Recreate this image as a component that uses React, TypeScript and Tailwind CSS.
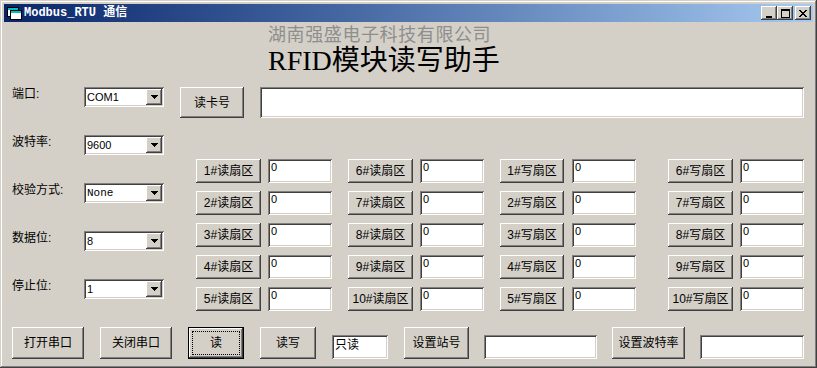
import React from 'react';

const raised =
  'bg-[#d4d0c8] shadow-[inset_-1px_-1px_#404040,inset_1px_1px_#ffffff,inset_-2px_-2px_#808080,inset_2px_2px_#d4d0c8]';
const sunken =
  'bg-white shadow-[inset_1px_1px_#808080,inset_-1px_-1px_#ffffff,inset_2px_2px_#404040,inset_-2px_-2px_#d4d0c8]';

function Btn({ label, className = '' }: { label: string; className?: string }) {
  return (
    <div className={`${raised} flex items-center justify-center text-[12px] leading-none text-black ${className}`}>
      {label}
    </div>
  );
}

function Field({ value = '', className = '' }: { value?: string; className?: string }) {
  return (
    <div className={`${sunken} pl-[3px] pt-[2px] text-[11px] leading-[12px] text-black ${className}`}>{value}</div>
  );
}

function Combo({ value, mono }: { value: string; mono?: boolean }) {
  return (
    <div className={`${sunken} w-[80px] h-[20px] p-[2px] flex`}>
      <span
        className={`flex-1 pl-[1px] text-[11px] leading-[16px] text-black ${
          mono ? "font-['Liberation_Mono',monospace]" : "font-['Liberation_Sans',sans-serif]"
        }`}
      >
        {value}
      </span>
      <div className={`${raised} w-[16px] h-[16px] flex items-center justify-center`}>
        <svg width="7" height="4" viewBox="0 0 7 4" shapeRendering="crispEdges">
          <path d="M0 0h7v1H0zM1 1h5v1H1zM2 2h3v1H2zM3 3h1v1H3z" fill="#000" />
        </svg>
      </div>
    </div>
  );
}

function CapBtn({ children }: { children: React.ReactNode }) {
  return <div className={`${raised} w-[16px] h-[14px] flex items-center justify-center`}>{children}</div>;
}

const ports: [string, string, boolean?][] = [
  ['端口:', 'COM1'],
  ['波特率:', '9600'],
  ['校验方式:', 'None', true],
  ['数据位:', '8'],
  ['停止位:', '1'],
];

export default function App() {
  const rows = [1, 2, 3, 4, 5];
  return (
    <div className="w-[817px] h-[368px] bg-[#d4d0c8] p-[4px] font-['Liberation_Sans','Noto_Sans_CJK_SC',sans-serif] shadow-[inset_-1px_-1px_#404040,inset_1px_1px_#d4d0c8,inset_-2px_-2px_#808080,inset_2px_2px_#ffffff] overflow-hidden">
      {/* title bar */}
      <div className="h-[18px] flex items-center bg-gradient-to-r from-[#0a246a] to-[#a6caf0] pl-[3px] pr-[2px]">
        <svg width="15" height="13" viewBox="0 0 15 13" shapeRendering="crispEdges">
          <rect x="0.5" y="0.5" width="11" height="9" fill="#fff" stroke="#000" />
          <rect x="1" y="1" width="10" height="2" fill="#00c0c0" />
          <rect x="3.5" y="3.5" width="11" height="9" fill="#fff" stroke="#000" />
          <rect x="4" y="4" width="10" height="2" fill="#00c0c0" />
        </svg>
        <span className="ml-[2px] text-[12px] leading-none font-bold text-white font-['Liberation_Mono','Noto_Sans_CJK_SC',monospace]">
          Modbus_RTU 通信
        </span>
        <div className="ml-auto flex items-center">
          <CapBtn>
            <svg width="8" height="9" viewBox="0 0 8 9" shapeRendering="crispEdges">
              <rect x="1" y="7" width="6" height="2" fill="#000" />
            </svg>
          </CapBtn>
          <CapBtn>
            <svg width="9" height="9" viewBox="0 0 9 9" shapeRendering="crispEdges">
              <path d="M0 0h9v2H0zM0 2h1v7H0zM8 2h1v7H8zM0 8h9v1H0z" fill="#000" />
            </svg>
          </CapBtn>
          <div className="ml-[2px]">
            <CapBtn>
              <svg width="8" height="7" viewBox="0 0 8 7" shapeRendering="crispEdges">
                <path
                  d="M0 0h2v1H0zM6 0h2v1H6zM1 1h2v1H1zM5 1h2v1H5zM2 2h4v1H2zM3 3h2v1H3zM2 4h4v1H2zM1 5h2v1H1zM5 5h2v1H5zM0 6h2v1H0zM6 6h2v1H6z"
                  fill="#000"
                />
              </svg>
            </CapBtn>
          </div>
        </div>
      </div>

      {/* client */}
      <div className="h-[342px] flex flex-col">
        <div className="h-[65px] pl-[264px] pt-[1px]">
          <div className="text-[18px] leading-[20px] tracking-[0.6px] text-[#8e8e8e] font-['Noto_Sans_CJK_SC',sans-serif]">
            湖南强盛电子科技有限公司
          </div>
          <div className="mt-[2px] text-[28px] leading-[32px] text-black font-['Liberation_Serif','Noto_Sans_CJK_SC',serif]">
            RFID模块读写助手
          </div>
        </div>

        <div className="flex">
          <div className="pl-[8px] flex flex-col gap-[28px]">
            {ports.map(([label, value, mono]) => (
              <div key={label} className="flex items-start">
                <span className="w-[72px] text-[12px] leading-[16px] -mt-[1px] text-black">{label}</span>
                <Combo value={value} mono={mono} />
              </div>
            ))}
          </div>

          <div className="ml-[16px] flex flex-col">
            <div className="flex">
              <Btn label="读卡号" className="w-[64px] h-[31px]" />
              <Field className="ml-[16px] w-[544px] h-[31px]" />
            </div>
            <div className="mt-[41px] ml-[16px] flex flex-col gap-[8px]">
              {rows.map((i) => (
                <div key={i} className="flex h-[24px]">
                  <Btn label={`${i}#读扇区`} className="w-[65px]" />
                  <Field value="0" className="ml-[7px] w-[64px]" />
                  <Btn label={`${i + 5}#读扇区`} className="ml-[16px] w-[65px]" />
                  <Field value="0" className="ml-[7px] w-[64px]" />
                  <Btn label={`${i}#写扇区`} className="ml-[16px] w-[64px]" />
                  <Field value="0" className="ml-[8px] w-[64px]" />
                  <Btn label={`${i + 5}#写扇区`} className="ml-[32px] w-[65px]" />
                  <Field value="0" className="ml-[7px] w-[64px]" />
                </div>
              ))}
            </div>
          </div>
        </div>

        <div className="mt-[16px] pl-[8px] flex items-end h-[32px]">
          <Btn label="打开串口" className="w-[72px] h-[32px]" />
          <Btn label="关闭串口" className="ml-[16px] w-[72px] h-[32px]" />
          <div className="ml-[16px] w-[56px] h-[32px] border border-black">
            <div className={`${raised} w-full h-full p-[3px]`}>
              <div className="w-full h-full border border-dotted border-black flex items-center justify-center text-[12px] leading-none text-black">
                读
              </div>
            </div>
          </div>
          <Btn label="读写" className="ml-[16px] w-[56px] h-[32px]" />
          <div className={`${sunken} ml-[16px] w-[56px] h-[24px] pl-[3px] pt-[3px] text-[12px] leading-[14px] text-black`}>
            只读
          </div>
          <Btn label="设置站号" className="ml-[16px] w-[65px] h-[32px]" />
          <Field className="ml-[15px] w-[113px] h-[24px]" />
          <Btn label="设置波特率" className="ml-[15px] w-[73px] h-[32px]" />
          <Field className="ml-[15px] w-[104px] h-[24px]" />
        </div>
      </div>
    </div>
  );
}
